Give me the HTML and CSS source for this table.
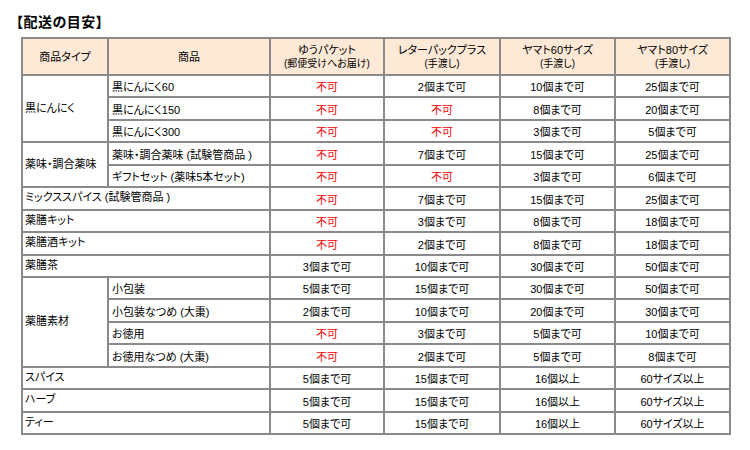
FILE: index.html
```html
<!DOCTYPE html>
<html lang="ja">
<head>
<meta charset="utf-8">
<link rel="stylesheet" href="styles.css">
</head>
<body>
<div class="page">
  <h2 class="title">【配送の目安】</h2>
  <table class="ship">
    <colgroup>
      <col class="c1"><col class="c2"><col class="c3"><col class="c4"><col class="c5"><col class="c6">
    </colgroup>
    <thead>
      <tr>
        <th>商品タイプ</th>
        <th>商品</th>
        <th>ゆうパケット<br><span class="sub">(郵便受けへお届け)</span></th>
        <th>レターパックプラス<br><span class="sub">(手渡し)</span></th>
        <th>ヤマト60サイズ<br><span class="sub">(手渡し)</span></th>
        <th>ヤマト80サイズ<br><span class="sub">(手渡し)</span></th>
      </tr>
    </thead>
    <tbody>
      <tr>
        <td class="type" rowspan="3">黒にんにく</td>
        <td class="item">黒にんにく60</td>
        <td class="v ng">不可</td><td class="v">2個まで可</td><td class="v">10個まで可</td><td class="v">25個まで可</td>
      </tr>
      <tr>
        <td class="item">黒にんにく150</td>
        <td class="v ng">不可</td><td class="v ng">不可</td><td class="v">8個まで可</td><td class="v">20個まで可</td>
      </tr>
      <tr>
        <td class="item">黒にんにく300</td>
        <td class="v ng">不可</td><td class="v ng">不可</td><td class="v">3個まで可</td><td class="v">5個まで可</td>
      </tr>
      <tr>
        <td class="type" rowspan="2">薬味・調合薬味</td>
        <td class="item">薬味・調合薬味 (試験管商品 )</td>
        <td class="v ng">不可</td><td class="v">7個まで可</td><td class="v">15個まで可</td><td class="v">25個まで可</td>
      </tr>
      <tr>
        <td class="item">ギフトセット (薬味5本セット)</td>
        <td class="v ng">不可</td><td class="v ng">不可</td><td class="v">3個まで可</td><td class="v">6個まで可</td>
      </tr>
      <tr>
        <td class="wide" colspan="2">ミックススパイス (試験管商品 )</td>
        <td class="v ng">不可</td><td class="v">7個まで可</td><td class="v">15個まで可</td><td class="v">25個まで可</td>
      </tr>
      <tr>
        <td class="wide" colspan="2">薬膳キット</td>
        <td class="v ng">不可</td><td class="v">3個まで可</td><td class="v">8個まで可</td><td class="v">18個まで可</td>
      </tr>
      <tr>
        <td class="wide" colspan="2">薬膳酒キット</td>
        <td class="v ng">不可</td><td class="v">2個まで可</td><td class="v">8個まで可</td><td class="v">18個まで可</td>
      </tr>
      <tr>
        <td class="wide" colspan="2">薬膳茶</td>
        <td class="v">3個まで可</td><td class="v">10個まで可</td><td class="v">30個まで可</td><td class="v">50個まで可</td>
      </tr>
      <tr>
        <td class="type" rowspan="4">薬膳素材</td>
        <td class="item">小包装</td>
        <td class="v">5個まで可</td><td class="v">15個まで可</td><td class="v">30個まで可</td><td class="v">50個まで可</td>
      </tr>
      <tr>
        <td class="item">小包装なつめ (大棗)</td>
        <td class="v">2個まで可</td><td class="v">10個まで可</td><td class="v">20個まで可</td><td class="v">30個まで可</td>
      </tr>
      <tr>
        <td class="item">お徳用</td>
        <td class="v ng">不可</td><td class="v">3個まで可</td><td class="v">5個まで可</td><td class="v">10個まで可</td>
      </tr>
      <tr>
        <td class="item">お徳用なつめ (大棗)</td>
        <td class="v ng">不可</td><td class="v">2個まで可</td><td class="v">5個まで可</td><td class="v">8個まで可</td>
      </tr>
      <tr>
        <td class="wide" colspan="2">スパイス</td>
        <td class="v">5個まで可</td><td class="v">15個まで可</td><td class="v">16個以上</td><td class="v">60サイズ以上</td>
      </tr>
      <tr>
        <td class="wide" colspan="2">ハーブ</td>
        <td class="v">5個まで可</td><td class="v">15個まで可</td><td class="v">16個以上</td><td class="v">60サイズ以上</td>
      </tr>
      <tr>
        <td class="wide" colspan="2">ティー</td>
        <td class="v">5個まで可</td><td class="v">15個まで可</td><td class="v">16個以上</td><td class="v">60サイズ以上</td>
      </tr>
    </tbody>
  </table>
</div>
</body>
</html>
```

FILE: styles.css
```css
html, body {
  margin: 0;
  padding: 0;
  background: #ffffff;
}

body {
  font-family: "Liberation Sans", "Noto Sans CJK JP", sans-serif;
  color: #000000;
  font-feature-settings: "palt";
}

.page {
  padding: 12px 0 0 16px;
}

.title {
  margin: 0 0 7px 0;
  font-size: 14px;
  line-height: 18px;
  font-weight: bold;
  letter-spacing: 0.5px;
  font-family: "Noto Sans CJK JP", sans-serif;
}

.ship {
  margin-left: 5px;
  border-collapse: collapse;
  table-layout: fixed;
  width: 708px;
  font-size: 11px;
  line-height: 13px;
}

.c1 { width: 86px; }
.c2 { width: 162px; }
.c3 { width: 114px; }
.c4 { width: 116px; }
.c5 { width: 115px; }
.c6 { width: 115px; }

.ship th,
.ship td {
  border: 2px solid #8a8a8a;
  padding: 0;
}

.ship thead tr {
  height: 37px;
}

.ship th {
  background: #fde9d6;
  font-weight: normal;
  text-align: center;
  vertical-align: middle;
  line-height: 13px;
  padding-top: 1px;
}

.sub {
  font-size: 10px;
}

.ship tbody tr {
  height: 22.45px;
}

.type {
  text-align: left;
  vertical-align: middle;
  padding-left: 2px !important;
}

.wide {
  text-align: left;
  vertical-align: middle;
  padding-left: 2px !important;
  padding-bottom: 1px !important;
}

.item {
  text-align: left;
  vertical-align: bottom;
  padding: 0 0 2px 3px !important;
}

.v {
  text-align: center;
  vertical-align: bottom;
  padding-bottom: 2px !important;
}

.ng {
  color: #ff0000;
}
```
